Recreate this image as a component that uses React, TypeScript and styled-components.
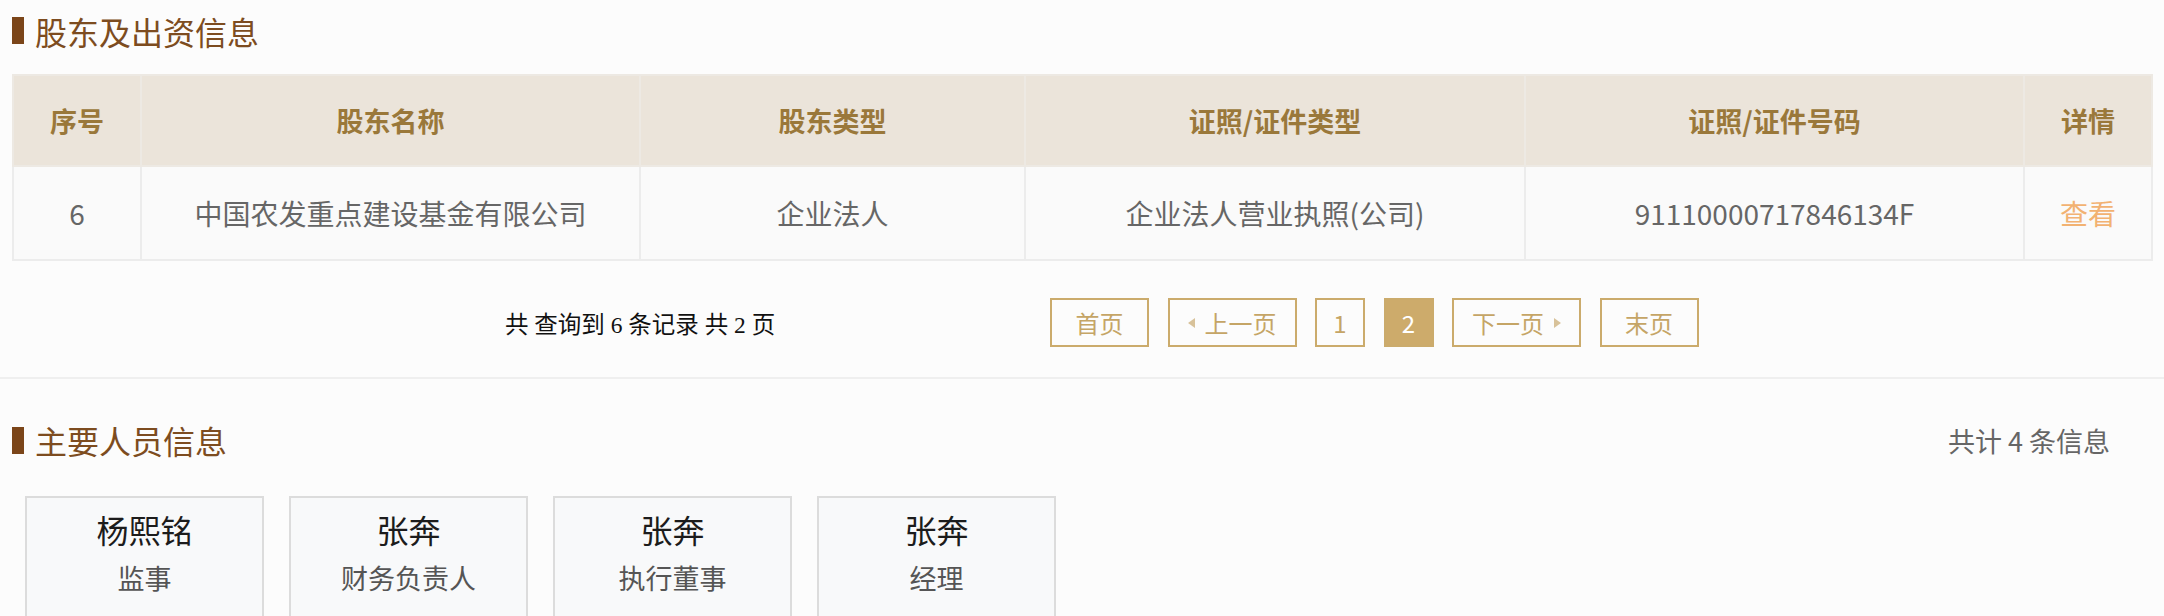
import React from "react";
import styled, { createGlobalStyle } from "styled-components";

const GlobalStyle = createGlobalStyle`
  html, body {
    margin: 0;
    padding: 0;
    background: #fcfcfc;
  }
  body {
    font-family: "Noto Sans CJK SC", "Noto Sans", sans-serif;
  }
`;

const Page = styled.div`
  width: 2164px;
  overflow: hidden;
`;

const Section = styled.section`
  padding: 0 13px 0 12px;
`;

const HeadRow = styled.div`
  height: ${props => props.theme.height}px;
  margin-top: ${props => props.theme.top || 0}px;
  display: flex;
  align-items: center;
  justify-content: space-between;
`;

const Heading = styled.h2`
  margin: 0;
  display: flex;
  align-items: center;
  gap: 11px;
  font-size: 32px;
  font-weight: 400;
  line-height: 1;
  color: #7d4c20;
`;

const HeadingBar = styled.span`
  width: 12px;
  height: 27px;
  background: #7b4519;
`;

const Count = styled.span`
  padding-right: 41px;
  font-size: 27px;
  color: #666;
`;

const Table = styled.table`
  width: 2139px;
  margin-top: 13px;
  border-collapse: collapse;
  table-layout: fixed;
`;

const HeadCell = styled.th`
  height: 89px;
  padding: 0;
  border: 2px solid #ede9e3;
  background: #ebe4da;
  color: #9a783a;
  font-size: 27px;
  font-weight: 700;
  text-align: center;
`;

const Cell = styled.td`
  height: 92px;
  padding: 0;
  border: 2px solid #ececec;
  background: #fafafa;
  color: ${props => (props.theme.link ? "#f2b272" : "#666")};
  font-size: 28px;
  text-align: center;
  cursor: ${props => (props.theme.link ? "pointer" : "default")};
`;

const PagerRow = styled.div`
  display: flex;
  align-items: center;
  height: 49px;
  margin-top: 37px;
  padding-bottom: 30px;
`;

const Summary = styled.div`
  width: 545px;
  padding-left: 493px;
  font-family: "Liberation Serif", "Noto Sans CJK SC", serif;
  font-size: 23.5px;
  color: #111;
  white-space: nowrap;
`;

const Pager = styled.div`
  display: flex;
  gap: 18.5px;
`;

const PageButton = styled.button`
  box-sizing: border-box;
  width: ${props => props.theme.width}px;
  height: 49px;
  display: flex;
  align-items: center;
  justify-content: center;
  gap: 10px;
  padding: 0;
  border: 2px solid #cbab6c;
  background: ${props => (props.theme.active ? "#cdab6b" : "transparent")};
  color: ${props => (props.theme.active ? "#fff" : "#c5a566")};
  font-family: "Noto Sans CJK SC", sans-serif;
  font-size: 24px;
  cursor: pointer;
`;

const Arrow = styled.span`
  width: 0;
  height: 0;
  border-top: 5px solid transparent;
  border-bottom: 5px solid transparent;
  ${props =>
    props.theme.dir === "left"
      ? "border-right: 7px solid #d8c29a;"
      : "border-left: 7px solid #d8c29a;"}
`;

const Divider = styled.hr`
  margin: 0;
  border: 0;
  height: 2px;
  background: #efefef;
`;

const Cards = styled.div`
  display: flex;
  gap: 25px;
  margin-top: 42px;
  padding-left: 13px;
`;

const Card = styled.div`
  box-sizing: border-box;
  width: 239px;
  height: 160px;
  padding-top: 12px;
  border: 2px solid #dcdcdc;
  background: #f8f9fa;
  text-align: center;
`;

const Name = styled.div`
  font-size: 32px;
  line-height: 38px;
  color: #1c1c1c;
`;

const Role = styled.div`
  margin-top: 12px;
  font-size: 27px;
  line-height: 36px;
  color: #555;
`;

const columns = [
  { title: "序号", width: 128 },
  { title: "股东名称", width: 499 },
  { title: "股东类型", width: 385 },
  { title: "证照/证件类型", width: 500 },
  { title: "证照/证件号码", width: 499 },
  { title: "详情", width: 128 },
];

const row = ["6", "中国农发重点建设基金有限公司", "企业法人", "企业法人营业执照(公司)", "91110000717846134F"];

const people = [
  { name: "杨熙铭", role: "监事" },
  { name: "张奔", role: "财务负责人" },
  { name: "张奔", role: "执行董事" },
  { name: "张奔", role: "经理" },
];

const App: React.FC = () => {
  return (
    <Page>
      <GlobalStyle />
      <Section>
        <HeadRow theme={{ height: 61 }}>
          <Heading>
            <HeadingBar />
            股东及出资信息
          </Heading>
        </HeadRow>
        <Table>
          <colgroup>
            {columns.map(col => (
              <col key={col.title} style={{ width: col.width }} />
            ))}
          </colgroup>
          <thead>
            <tr>
              {columns.map(col => (
                <HeadCell key={col.title}>{col.title}</HeadCell>
              ))}
            </tr>
          </thead>
          <tbody>
            <tr>
              {row.map((value, index) => (
                <Cell key={index}>{value}</Cell>
              ))}
              <Cell theme={{ link: true }}>查看</Cell>
            </tr>
          </tbody>
        </Table>
        <PagerRow>
          <Summary>共 查询到 6 条记录 共 2 页</Summary>
          <Pager>
            <PageButton theme={{ width: 99 }}>首页</PageButton>
            <PageButton theme={{ width: 129 }}>
              <Arrow theme={{ dir: "left" }} />
              上一页
            </PageButton>
            <PageButton theme={{ width: 50 }}>1</PageButton>
            <PageButton theme={{ width: 50, active: true }}>2</PageButton>
            <PageButton theme={{ width: 129 }}>
              下一页
              <Arrow theme={{ dir: "right" }} />
            </PageButton>
            <PageButton theme={{ width: 99 }}>末页</PageButton>
          </Pager>
        </PagerRow>
      </Section>
      <Divider />
      <Section>
        <HeadRow theme={{ height: 28, top: 47 }}>
          <Heading>
            <HeadingBar />
            主要人员信息
          </Heading>
          <Count>共计 4 条信息</Count>
        </HeadRow>
        <Cards>
          {people.map((person, index) => (
            <Card key={index}>
              <Name>{person.name}</Name>
              <Role>{person.role}</Role>
            </Card>
          ))}
        </Cards>
      </Section>
    </Page>
  );
};

export default App;
